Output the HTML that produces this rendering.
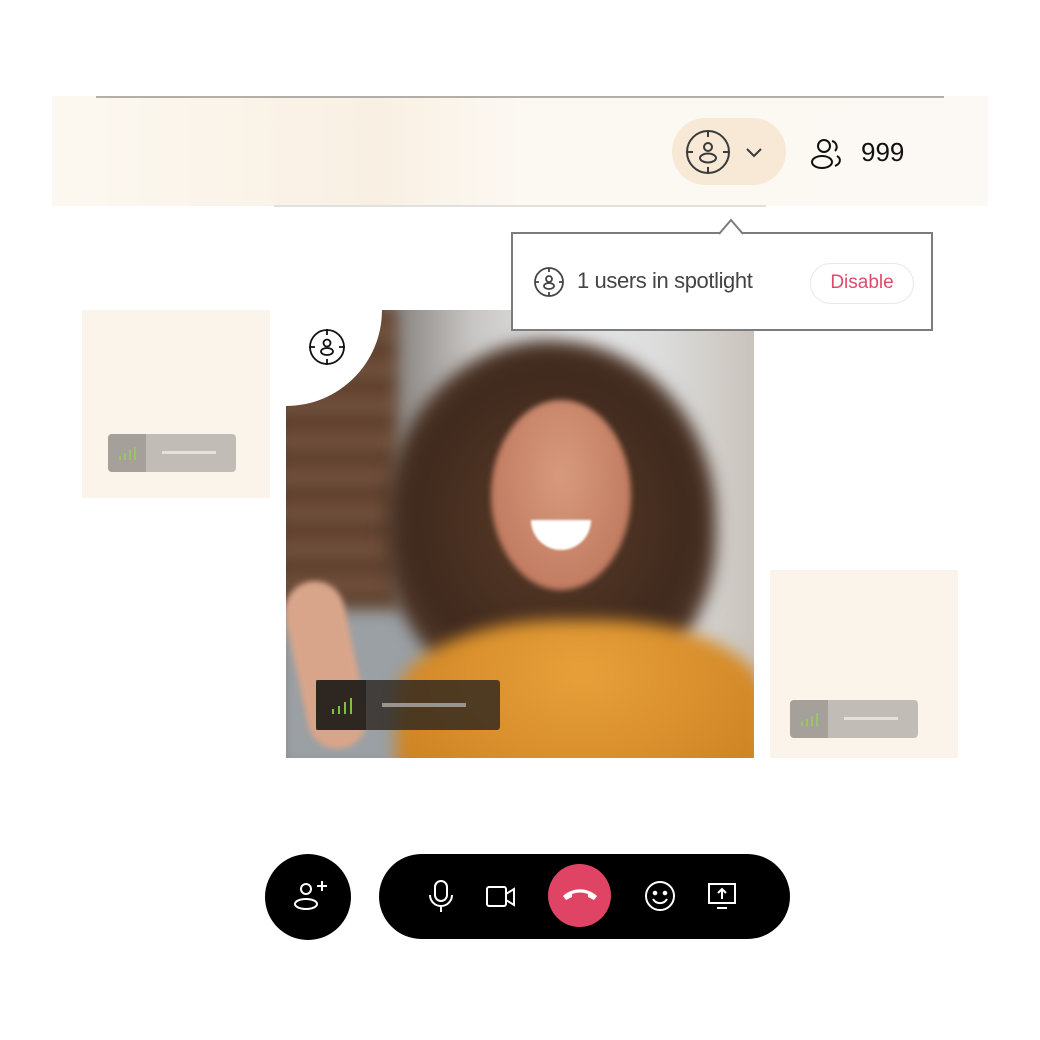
<!DOCTYPE html>
<html><head><meta charset="utf-8"><style>
*{margin:0;padding:0;box-sizing:border-box}
body{width:1040px;height:1040px;background:#fff;position:relative;overflow:hidden;font-family:"Liberation Sans",sans-serif}
.abs{position:absolute}
.bar{left:52px;top:96px;width:936px;height:110px;background:linear-gradient(90deg,#fcf8f1,#f9f0e3 35%,#fcf8f2 50%,#fcf8f3)}
.tile{background:#fbf4ea}
.pill{background:#c1bcb5;border-radius:4px}
.pill .s{position:absolute;left:0;top:0;bottom:0;width:38px;background:#a5a19a;border-radius:4px 0 0 4px}
.bl{filter:blur(8px)}
</style></head><body>
<div class="abs bar"></div>
<div class="abs" style="left:96px;top:96px;width:848px;height:2px;background:#b3aea7"></div>
<div class="abs" style="left:274px;top:205px;width:492px;height:2px;background:#e2e0dd"></div>
<div class="abs" style="left:672px;top:118px;width:114px;height:67px;border-radius:34px;background:#f7e9d6"></div>
<svg class="abs" style="left:684px;top:128px" width="48" height="48" viewBox="0 0 48 48" fill="none" stroke="#3a3a3a" stroke-width="2"><circle cx="24" cy="24" r="21"/><path d="M24 3v6M24 39v6M3 24h6M39 24h6"/><circle cx="24" cy="19" r="4"/><ellipse cx="24" cy="30" rx="8" ry="4.5"/></svg>
<svg class="abs" style="left:744px;top:146px" width="20" height="14" viewBox="0 0 20 14" fill="none" stroke="#3a3a3a" stroke-width="2"><path d="M3 3l7 7 7-7"/></svg>
<svg class="abs" style="left:810px;top:136px" width="36" height="36" viewBox="0 0 36 36" fill="none" stroke="#111" stroke-width="2"><circle cx="14" cy="10" r="6"/><ellipse cx="12" cy="26" rx="10" ry="6"/><path d="M22 5a6 6 0 0 1 3 10M27 20c5 3 3 8-2 10"/></svg>
<div class="abs" style="left:861px;top:137px;font-size:26px;color:#111">999</div>
<!-- left tile -->
<div class="abs tile" style="left:82px;top:310px;width:188px;height:188px"></div>
<div class="abs pill" style="left:108px;top:434px;width:128px;height:38px"><div class="s"></div>
<svg class="abs" style="left:10px;top:10px" width="20" height="18"><path d="M2 16v-4M7 16v-7M12 16v-10M17 16v-13" stroke="#9ac46a" stroke-width="2"/></svg>
<div class="abs" style="left:54px;top:17px;width:54px;height:3px;background:#e4e2de"></div></div>
<!-- right tile -->
<div class="abs tile" style="left:770px;top:570px;width:188px;height:188px"></div>
<div class="abs pill" style="left:790px;top:700px;width:128px;height:38px"><div class="s"></div>
<svg class="abs" style="left:10px;top:10px" width="20" height="18"><path d="M2 16v-4M7 16v-7M12 16v-10M17 16v-13" stroke="#9ac46a" stroke-width="2"/></svg>
<div class="abs" style="left:54px;top:17px;width:54px;height:3px;background:#e4e2de"></div></div>
<!-- photo -->
<div class="abs" style="left:286px;top:310px;width:468px;height:448px;overflow:hidden;background:linear-gradient(90deg,#4a3428 0,#6b4e3c 18%,#8e8a86 25%,#c8c6c4 40%,#e6e8ea 60%,#dcdcdc 80%,#c9c3bc 100%)">
<div class="abs bl" style="left:-10px;top:0;width:120px;height:320px;background:repeating-linear-gradient(180deg,#5a3a28 0,#7a5a44 30px,#3d2a20 36px)"></div>
<div class="abs bl" style="left:-10px;top:300px;width:170px;height:160px;background:#9aa0a4"></div>
<div class="abs bl" style="left:100px;top:30px;width:330px;height:360px;border-radius:50% 50% 45% 45%;background:radial-gradient(ellipse at 50% 50%,#5a3a26 0,#3f2a1e 60%,#5b4030 80%,rgba(90,64,48,0) 100%)"></div>
<div class="abs" style="left:205px;top:90px;width:140px;height:190px;border-radius:50%;background:radial-gradient(ellipse at 50% 40%,#d79a7c,#b97058);filter:blur(3px)"></div>
<div class="abs" style="left:245px;top:210px;width:60px;height:30px;border-radius:0 0 30px 30px;background:#fff;filter:blur(1px)"></div>
<div class="abs bl" style="left:110px;top:310px;width:370px;height:180px;border-radius:45% 45% 0 0;background:radial-gradient(ellipse at 50% 30%,#e7a03a,#c97d1e)"></div>
<div class="abs" style="left:10px;top:270px;width:60px;height:170px;border-radius:30px;background:#d9a58a;transform:rotate(-12deg);filter:blur(3px)"></div>
<div class="abs" style="left:-96px;top:-96px;width:192px;height:192px;border-radius:50%;background:#fff"></div>
<div class="abs" style="left:30px;top:370px;width:184px;height:50px;background:rgba(40,35,30,.78);border-radius:3px">
<div class="abs" style="left:0;top:0;bottom:0;width:50px;background:rgba(25,22,20,.6)"></div>
<svg class="abs" style="left:14px;top:14px" width="24" height="22"><path d="M3 20v-5M9 20v-8M15 20v-12M21 20v-16" stroke="#7fc240" stroke-width="2"/></svg>
<div class="abs" style="left:66px;top:23px;width:84px;height:4px;background:#9a948e"></div></div>
</div>
<svg class="abs" style="left:307px;top:327px" width="40" height="40" viewBox="0 0 40 40" fill="none" stroke="#111" stroke-width="1.8"><circle cx="20" cy="20" r="17"/><path d="M20 2v6M20 32v6M2 20h6M32 20h6"/><circle cx="20" cy="16" r="3.5"/><ellipse cx="20" cy="24.5" rx="6" ry="3.5"/></svg>
<!-- popover -->
<div class="abs" style="left:511px;top:232px;width:422px;height:99px;border:2px solid #7c7c7c;background:#fff"></div>
<svg class="abs" style="left:719px;top:218px" width="26" height="18" viewBox="0 0 26 18"><path d="M0 16L12 2 24 16" fill="#fff" stroke="#7c7c7c" stroke-width="2"/></svg>
<svg class="abs" style="left:533px;top:266px" width="32" height="32" viewBox="0 0 32 32" fill="none" stroke="#444" stroke-width="1.8"><circle cx="16" cy="16" r="14"/><path d="M16 2v4M16 26v4M2 16h4M26 16h4"/><circle cx="16" cy="13" r="3"/><ellipse cx="16" cy="20" rx="5" ry="3"/></svg>
<div class="abs" style="left:577px;top:268px;font-size:22px;color:#444;letter-spacing:-0.4px">1 users in spotlight</div>
<div class="abs" style="left:810px;top:263px;width:104px;height:41px;border:1.5px solid #e8e8ea;border-radius:21px;color:#e04a6a;font-size:19px;text-align:center;line-height:38px">Disable</div>
<!-- controls -->
<div class="abs" style="left:265px;top:854px;width:86px;height:86px;border-radius:50%;background:#000"></div>
<svg class="abs" style="left:290px;top:876px" width="40" height="40" viewBox="0 0 40 40" fill="none" stroke="#fff" stroke-width="2"><circle cx="16" cy="13" r="5"/><ellipse cx="16" cy="28" rx="11" ry="5"/><path d="M27 10h10M32 5v10"/></svg>
<div class="abs" style="left:379px;top:854px;width:411px;height:85px;border-radius:43px;background:#000"></div>
<svg class="abs" style="left:426px;top:879px" width="30" height="36" viewBox="0 0 30 36" fill="none" stroke="#fff" stroke-width="2"><rect x="9" y="2" width="12" height="20" rx="6"/><path d="M4 16a11 11 0 0 0 22 0M15 27v6"/></svg>
<svg class="abs" style="left:485px;top:883px" width="32" height="28" viewBox="0 0 32 28" fill="none" stroke="#fff" stroke-width="2"><rect x="2" y="4" width="19" height="19" rx="2"/><path d="M21 11l8-5v16l-8-5z"/></svg>
<div class="abs" style="left:548px;top:864px;width:63px;height:63px;border-radius:50%;background:#e04465"></div>
<svg class="abs" style="left:558px;top:882px" width="44" height="24" viewBox="0 0 44 24"><path d="M5 14c10-9 24-9 34 0l-3 4-6-3v-3c-6-2-10-2-16 0v3l-6 3z" fill="#fff"/></svg>
<svg class="abs" style="left:644px;top:880px" width="32" height="32" viewBox="0 0 32 32" fill="none" stroke="#fff" stroke-width="2"><circle cx="16" cy="16" r="14"/><circle cx="11" cy="13" r="1.3" fill="#fff"/><circle cx="21" cy="13" r="1.3" fill="#fff"/><path d="M9 19a8 8 0 0 0 14 0"/></svg>
<svg class="abs" style="left:706px;top:882px" width="32" height="30" viewBox="0 0 32 30" fill="none" stroke="#fff" stroke-width="2"><rect x="3" y="2" width="26" height="19"/><path d="M16 17V7M12 11l4-4 4 4M11 26h10"/></svg>
</body></html>
